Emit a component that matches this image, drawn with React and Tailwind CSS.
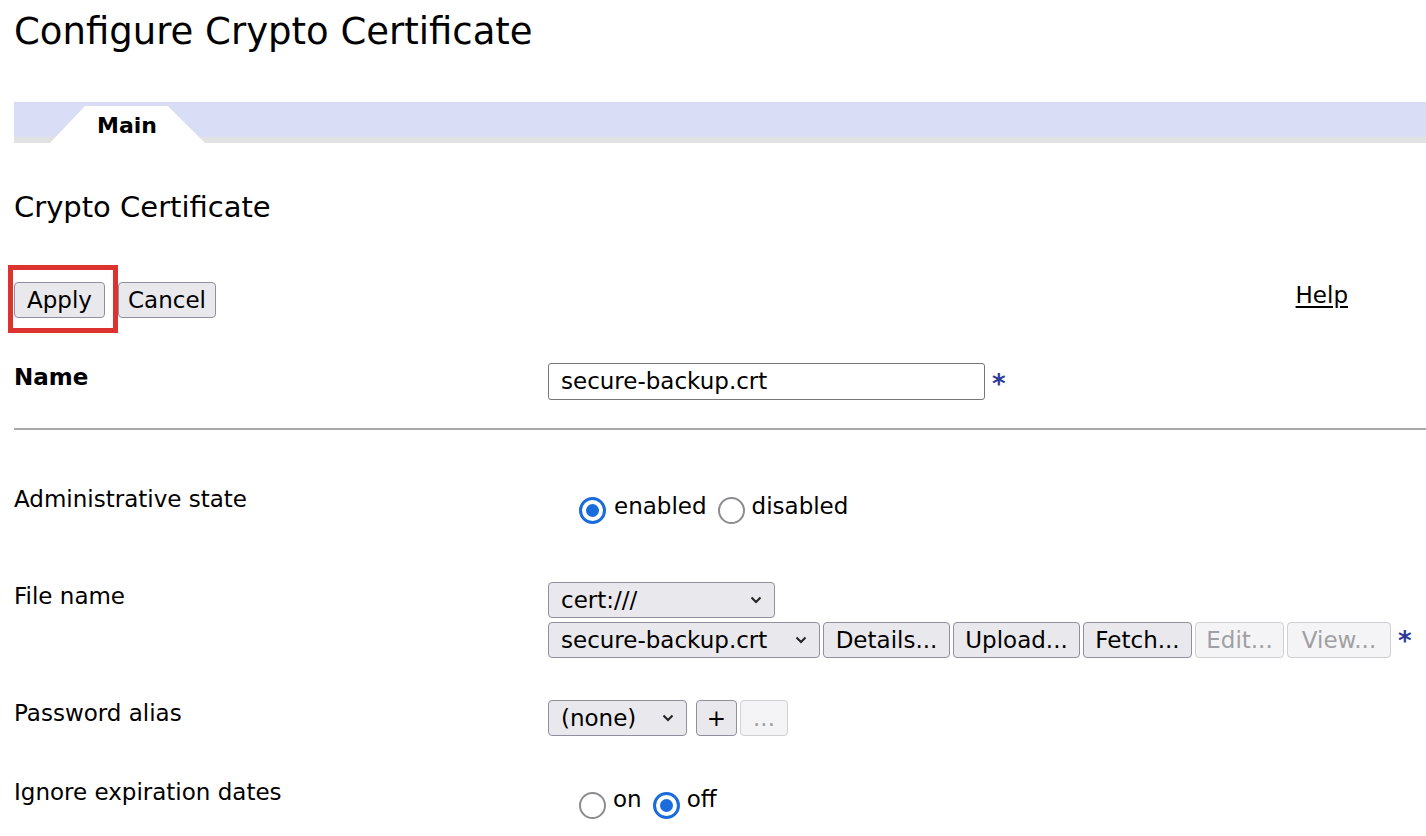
import React from 'react';

function Radio({ checked }) {
  return checked ? (
    <span className="w-[27px] h-[27px] rounded-full border-[3px] border-[#1a6bdc] bg-white flex items-center justify-center shrink-0">
      <span className="w-[13px] h-[13px] rounded-full bg-[#1a6bdc]"></span>
    </span>
  ) : (
    <span className="block w-[27px] h-[27px] rounded-full border-[2.5px] border-[#8c8c90] bg-white shrink-0"></span>
  );
}

function Chevron() {
  return (
    <svg width="12" height="8" viewBox="0 0 12 8" className="shrink-0">
      <path d="M1.5 1.5 L6 6 L10.5 1.5" fill="none" stroke="#222" strokeWidth="2" />
    </svg>
  );
}

function Select({ value, width }) {
  return (
    <div className={`${width} h-[36px] flex items-center justify-between pl-[12px] pr-[12px] bg-[#e9e9ed] border-[1.5px] border-[#8f8f9d] rounded-[4px] text-black`}>
      <span>{value}</span>
      <Chevron />
    </div>
  );
}

function Btn({ children, width, disabled }) {
  return (
    <div
      className={`${width} h-[36px] flex items-center justify-center rounded-[4px] border-[1.5px] ${
        disabled
          ? 'bg-[#f4f4f6] border-[#cfcfd4] text-[#a0a0a4]'
          : 'bg-[#e9e9ed] border-[#8f8f9d] text-black'
      }`}
    >
      {children}
    </div>
  );
}

function Req() {
  return <span className="text-[26px] font-bold text-[#2e3a9a] leading-none">*</span>;
}

export default function App() {
  return (
    <div className="min-h-[836px] bg-white font-['DejaVu_Sans',Verdana,sans-serif] text-[23px] leading-[27px] text-black pl-[14px]">
      {/* Titre */}
      <h1 className="pt-[10px] text-[37px] leading-[44px] font-normal">Configure Crypto Certificate</h1>

      {/* Onglets */}
      <div className="mt-[48px] h-[41px] bg-[#d9def6] shadow-[inset_0_-6px_0_#e2e2e2] flex items-end">
        <div className="ml-[36px] w-[155px] h-[37px] bg-white [clip-path:polygon(22.6%_0,76%_0,100%_100%,0_100%)] pl-[47px] pt-[6px] font-bold text-[22px]">
          Main
        </div>
      </div>

      <h2 className="mt-[47px] text-[29px] leading-[34px] font-normal">Crypto Certificate</h2>

      {/* Boutons */}
      <div className="mt-[41px] flex items-start">
        <div className="relative pt-[17px] pb-[15px] pr-[13px]">
          <span className="absolute left-[-6px] top-0 w-[110px] h-[68px] border-[5px] border-[#dc3330]"></span>
          <Btn width="w-[91px]">Apply</Btn>
        </div>
        <div className="pt-[17px]">
          <Btn width="w-[98px]">Cancel</Btn>
        </div>
        <a className="ml-auto mr-[78px] mt-[17px] underline underline-offset-[3px]">Help</a>
      </div>

      {/* Nom */}
      <div className="mt-[30px] flex items-start">
        <div className="w-[534px] mt-[1px] font-bold">Name</div>
        <div className="w-[437px] h-[37px] border-[1.5px] border-[#767676] rounded-[3px] pl-[12px] flex items-center">
          secure-backup.crt
        </div>
        <div className="ml-[7px] mt-[8px]"><Req /></div>
      </div>

      <div className="mt-[28px] border-t-2 border-[#a9a9a9]"></div>

      {/* État administratif */}
      <div className="mt-[54px] flex items-start">
        <div className="w-[534px] mt-[2px]">Administrative state</div>
        <div className="ml-[31px] mt-[13px] flex items-center">
          <Radio checked />
          <span className="ml-[8px] -mt-[8px]">enabled</span>
          <span className="ml-[11px] flex"><Radio /></span>
          <span className="ml-[7px] -mt-[8px]">disabled</span>
        </div>
      </div>

      {/* Fichier */}
      <div className="mt-[58px] flex items-start">
        <div className="w-[534px] mt-[1px]">File name</div>
        <div className="flex flex-col gap-[4px]">
          <Select value="cert:///" width="w-[227px]" />
          <div className="flex items-center gap-[3px]">
            <Select value="secure-backup.crt" width="w-[272px]" />
            <Btn width="w-[127px]">Details...</Btn>
            <Btn width="w-[127px]">Upload...</Btn>
            <Btn width="w-[109px]">Fetch...</Btn>
            <Btn width="w-[89px]" disabled>Edit...</Btn>
            <Btn width="w-[104px]" disabled>View...</Btn>
            <span className="ml-[4px] mt-[4px]"><Req /></span>
          </div>
        </div>
      </div>

      {/* Alias */}
      <div className="mt-[42px] flex items-start">
        <div className="w-[534px]">Password alias</div>
        <div className="flex items-center">
          <Select value="(none)" width="w-[139px]" />
          <div className="ml-[9px]"><Btn width="w-[41px]">+</Btn></div>
          <div className="ml-[3px]"><Btn width="w-[48px]" disabled>...</Btn></div>
        </div>
      </div>

      {/* Expiration */}
      <div className="mt-[43px] flex items-start pb-[16px]">
        <div className="w-[534px]">Ignore expiration dates</div>
        <div className="ml-[31px] mt-[13px] flex items-center">
          <Radio />
          <span className="ml-[7px] -mt-[12px]">on</span>
          <span className="ml-[11px] flex"><Radio checked /></span>
          <span className="ml-[7px] -mt-[12px]">off</span>
        </div>
      </div>
    </div>
  );
}
